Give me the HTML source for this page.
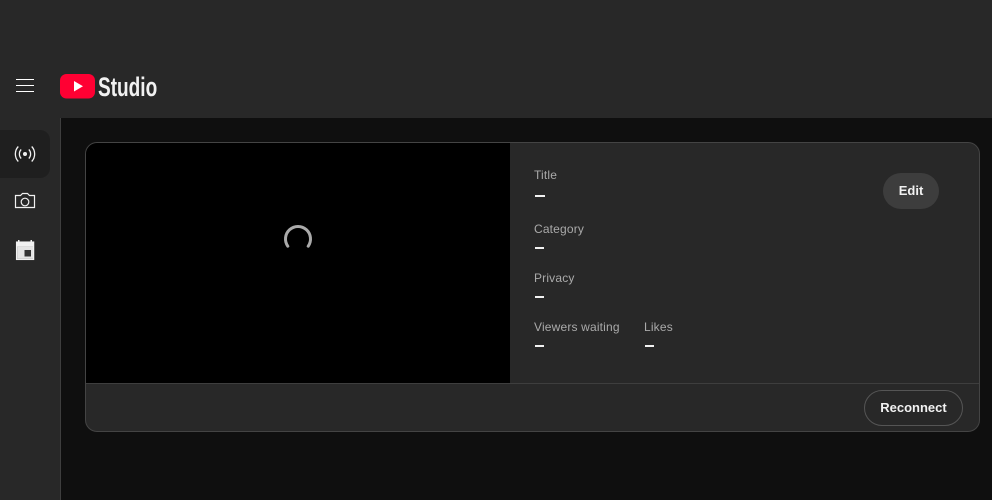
<!DOCTYPE html>
<html lang="en">
<head>
<meta charset="utf-8">
<title>Studio</title>
<style>
html,body{margin:0;padding:0;width:992px;height:500px;overflow:hidden;background:#0f0f0f;font-family:"Liberation Sans",sans-serif}
.a{position:absolute;white-space:nowrap}
#hdr{left:0;top:0;width:992px;height:118px;background:#282828}
#side{left:0;top:118px;width:60px;height:382px;background:#282828;border-right:1px solid #3e3e3e}
#sel{left:0;top:130px;width:50px;height:48px;background:#1f1f1f;border-radius:0 10px 10px 0}
#card{left:85px;top:142px;width:893px;height:288px;background:#282828;border:1px solid #444;border-radius:12px;overflow:hidden}
#video{left:0;top:0;width:424px;height:240px;background:#000}
#line{left:0;top:240px;width:893px;height:1px;background:#3e3e3e}
.l{font-size:12px;line-height:16px;color:#aaa;letter-spacing:.17px}
.v{height:1.5px;background:#f1f1f1}
.btn{font-size:13px;font-weight:700;color:#f1f1f1;text-align:center;box-sizing:border-box}
</style>
</head>
<body>
<div class="a" id="hdr"></div>
<div class="a" id="side"></div>
<div class="a" id="sel"></div>

<svg class="a" style="left:16px;top:79px" width="18" height="14"><path d="M0 .5H18M0 6.5H18M0 12.5H18" stroke="#fff" stroke-width="1.100"/></svg>

<svg class="a" style="left:60px;top:74px" width="35" height="25"><rect width="35" height="24.500" rx="6.500" fill="#ff0033"/><path d="M14 7V17.500L23 12.250Z" fill="#fff"/></svg>
<div class="a" style="left:98px;top:72px;font-size:27px;font-weight:700;line-height:30px;color:#f1f1f1;transform:scaleX(.705);transform-origin:0 0">Studio</div>

<svg class="a" style="left:13px;top:142px" width="24" height="24" fill="none" stroke="#f1f1f1" stroke-width="1.300"><circle cx="12" cy="12" r="2" fill="#f1f1f1" stroke="none"/><path d="M8.200 7.500a6.500 6.500 0 0 0 0 9M15.800 7.500a6.500 6.500 0 0 1 0 9M5.300 4.500a11 11 0 0 0 0 15M18.700 4.500a11 11 0 0 1 0 15"/></svg>
<svg class="a" style="left:13px;top:189px" width="24" height="24" fill="none" stroke="#f1f1f1" stroke-width="1.200"><path d="M2.500 6.500H7.500L9.500 4.500H14.500L16.500 6.500H21.500V18.500H2.500Z"/><circle cx="12" cy="13" r="3.800"/></svg>
<svg class="a" style="left:13px;top:238px" width="24" height="24"><path d="M5 2h1.500V5h-1.500zM17.500 2H19V5h-1.500z" fill="#f1f1f1"/><rect x="3.600" y="4.100" width="17" height="17.300" fill="none" stroke="#f1f1f1" stroke-width="1.300"/><rect x="3.600" y="4.100" width="17" height="4.500" fill="#f1f1f1"/><rect x="4.200" y="8.600" width="15.800" height="12.200" fill="#e4e4e4"/><rect x="11.500" y="12" width="6.500" height="6.500" fill="#333"/></svg>

<div class="a" id="card">
  <div class="a" id="video"></div>
  <div class="a" id="line"></div>
</div>

<svg class="a" style="left:282px;top:223px" width="32" height="32" fill="none"><path d="M5.800 23.200A12.500 12.500 0 1 1 26.200 23.200" stroke="#aaa" stroke-width="3" stroke-linecap="round"/></svg>

<div class="a l" style="left:534px;top:167px">Title</div>
<div class="a v" style="left:535px;top:195px;width:10px;height:2px"></div>
<div class="a l" style="left:534px;top:221px">Category</div>
<div class="a v" style="left:535px;top:247px;width:9px"></div>
<div class="a l" style="left:534px;top:270px">Privacy</div>
<div class="a v" style="left:535px;top:296px;width:9px"></div>
<div class="a l" style="left:534px;top:319px">Viewers waiting</div>
<div class="a v" style="left:535px;top:345px;width:9px"></div>
<div class="a l" style="left:644px;top:319px">Likes</div>
<div class="a v" style="left:645px;top:345px;width:9px"></div>

<div class="a btn" style="left:883px;top:173px;width:56px;height:36px;border-radius:18px;background:#3d3d3d;line-height:35px">Edit</div>
<div class="a btn" style="left:864px;top:390px;width:99px;height:36px;border-radius:18px;border:1px solid #555;line-height:33px">Reconnect</div>
</body>
</html>
